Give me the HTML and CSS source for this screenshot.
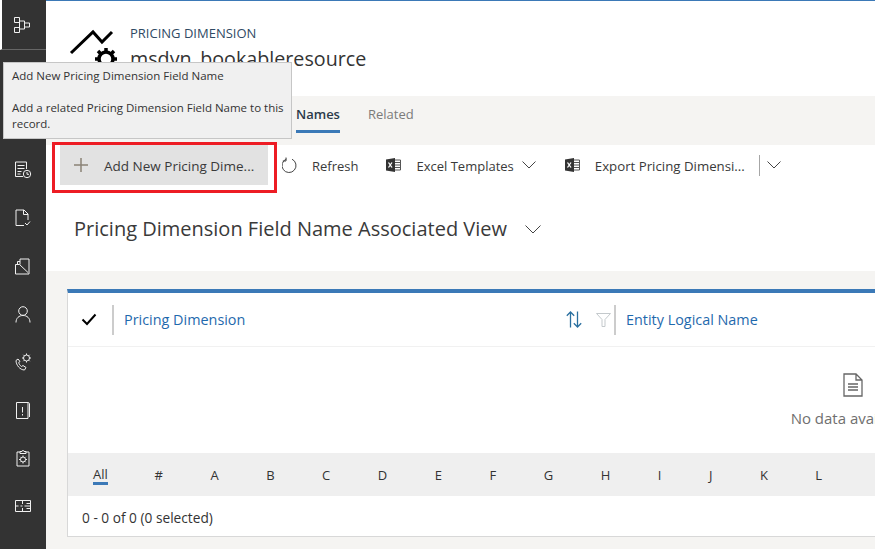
FILE: index.html
```html
<!DOCTYPE html>
<html>
<head>
	<meta charset="utf-8">
	<title>Pricing Dimension</title>
	<link rel="stylesheet" href="styles.css">
</head>
<body>
	<div class="app">
		<div class="sidebar">
			<div class="navItem current">
				<svg width="16" height="16" viewBox="0 0 16 16"><path d="M.5.500h5v5h-5zM.5 10.500h5v5h-5zM5.500 3v10.500M5.500 4h5v8h-5M10.500 6h5v4h-5z"/></svg>
			</div>
			<div class="navItem"></div>
			<div class="navItem"></div>
			<div class="navItem">
				<svg width="18" height="18" viewBox="0 0 18 18"><path d="M9 15.500H1.500V1H12.500V8M3.500 4.500h7M3.500 7.500h7M3.500 10.500h4M3.500 13h3"/><circle cx="13" cy="13" r="3.700"/><path d="M13 11v2.300h2"/></svg>
			</div>
			<div class="navItem">
				<svg width="16" height="18" viewBox="0 0 16 18"><path d="M9 16.500H1V1h8l4 4v6M8.500 1v4.500H13M10 14l2 2 3-3.500"/></svg>
			</div>
			<div class="navItem">
				<svg width="16" height="17" viewBox="0 0 16 17"><path d="M.500 16V6.500h4l8.500 8M.500 16h13.500V1H5v5.500M2.500 6.500v-3H5"/></svg>
			</div>
			<div class="navItem">
				<svg width="16" height="17" viewBox="0 0 16 17"><circle cx="8" cy="5" r="4.300"/><path d="M1 16.500c0-4.500 3-7 7-7s7 2.500 7 7"/></svg>
			</div>
			<div class="navItem">
				<svg width="17" height="18" viewBox="0 0 17 18"><path d="M3 6 1 7.500C1 12 5 17 9.500 17l1.500-2.500-3-2-1.500 1C5 12.500 4 11 3.700 9.500L5 8.500z"/><circle cx="11.500" cy="5" r="3"/><path d="M11.500.500v1.500M11.500 8v1.500M7 5h1.500M14.500 5H16M8.300 1.800l1 1M13.700 7.200l1 1M8.300 8.200l1-1M13.700 2.800l1-1"/></svg>
			</div>
			<div class="navItem">
				<svg width="14" height="17" viewBox="0 0 14 17"><path d="M12 .500H.500V16.500H12V.500c1 0 1.500.500 1.500 1.500V15M6.500 5v5.500M6.500 12v1.500"/></svg>
			</div>
			<div class="navItem">
				<svg width="14" height="18" viewBox="0 0 14 18"><path d="M4 3H1v14h12V3h-3M4 4.500V2.500h2C6 1 8 1 8 2.500h2v2z"/><circle cx="7" cy="10.500" r="2.500"/><path d="M7 6.500v1.500M7 13v1.500M3 10.500h1.500M9.500 10.500H11M4.300 7.800l1 1M8.700 12.200l1 1M4.300 13.200l1-1M8.700 8.800l1-1"/></svg>
			</div>
			<div class="navItem">
				<svg width="16" height="12" viewBox="0 0 16 12"><path d="M.500.500h15v11H.500zM.500 6h3M5.500 6h2M7.500.500V4M7.500 8v3.500M9.500 6h6M11.500 3.500h4M11.500 8.500h4"/></svg>
			</div>
		</div>

		<div class="main">
			<div class="head">
				<svg class="entityIcon" width="44" height="40" viewBox="0 0 44 40">
					<path class="trend" d="M1 22 23 1 32 11 42 1"/>
					<g class="gear">
						<circle cx="36" cy="28" r="7"/>
						<path d="M36 17v4M36 35v4M25 28h4M43 28h4M28 20l3 3M41 33l3 3M28 36l3-3M41 23l3-3"/>
					</g>
				</svg>
				<div class="headText">
					<div class="entityType">PRICING DIMENSION</div>
					<div class="entityName">msdyn_bookableresource</div>
				</div>
			</div>

			<div class="tabs">
				<span class="tab active">Names</span>
				<span class="tab">Related</span>
			</div>

			<div class="toolbar">
				<div class="cmd addBtn">
					<svg class="plus" width="14" height="14" viewBox="0 0 14 14"><path d="M7 0v14M0 7h14"/></svg>
					<span>Add New Pricing Dime...</span>
				</div>
				<div class="cmd refresh">
					<svg class="line" width="16" height="16" viewBox="0 0 16 16"><path d="M10 2.200A7 7 0 1 1 4.500 2M4 .500v3.500H.800"/></svg>
					<span>Refresh</span>
				</div>
				<div class="cmd excel">
					<svg width="15" height="14" viewBox="0 0 15 14"><path class="xlBack" d="M8 2h6.500v10H8"/><path class="xlLines" d="M9 4.500h5M9 7h5M9 9.500h5"/><path class="xlFront" d="M0 1.500 9 0v14L0 12.500z"/><path class="xlMark" d="M2.500 4.500l3.500 5M6 4.500l-3.500 5"/></svg>
					<span>Excel Templates</span>
					<svg class="line chevron" width="14" height="8" viewBox="0 0 14 8"><path d="M.500.500 7 7 13.500.500"/></svg>
				</div>
				<div class="cmd export">
					<svg width="15" height="14" viewBox="0 0 15 14"><path class="xlBack" d="M8 2h6.500v10H8"/><path class="xlLines" d="M9 4.500h5M9 7h5M9 9.500h5"/><path class="xlFront" d="M0 1.500 9 0v14L0 12.500z"/><path class="xlMark" d="M2.500 4.500l3.500 5M6 4.500l-3.500 5"/></svg>
					<span>Export Pricing Dimensi...</span>
				</div>
				<div class="cmdSep"></div>
				<svg class="line chevron more" width="14" height="8" viewBox="0 0 14 8"><path d="M.500.500 7 7 13.500.500"/></svg>
			</div>

			<div class="viewTitle">
				<span>Pricing Dimension Field Name Associated View</span>
				<svg class="line" width="16" height="9" viewBox="0 0 16 9"><path d="M.500.500 8 8 15.500.500"/></svg>
			</div>

			<div class="content">
				<div class="grid">
					<div class="gridHead">
						<svg class="check" width="16" height="13" viewBox="0 0 16 13"><path d="M1.500 6.500 6 11 14.500 1.500"/></svg>
						<div class="colSep firstSep"></div>
						<div class="colName first">Pricing Dimension</div>
						<svg class="sort" width="16" height="17" viewBox="0 0 16 17"><path d="M4.500 16.500V1M.800 4.700 4.500 1l3.700 3.700M11.500.500V16M7.800 12.300l3.700 3.700 3.700-3.700"/></svg>
						<svg class="filter" width="15" height="14" viewBox="0 0 15 14"><path d="M.500.500h14L9 6.500v7H6v-7z"/></svg>
						<div class="colSep"></div>
						<div class="colName">Entity Logical Name</div>
					</div>
					<div class="empty">
						<svg class="docIcon" width="20" height="24" viewBox="0 0 20 24"><path d="M1 1h12l6 6v16H1zM13 1v6h6M5 11h10M5 14h10M5 17h10"/></svg>
						<div>No data available.</div>
					</div>
					<div class="jumpBar">
						<span class="all">All</span>
						<span class="jump">#</span>
						<span class="jump">A</span>
						<span class="jump">B</span>
						<span class="jump">C</span>
						<span class="jump">D</span>
						<span class="jump">E</span>
						<span class="jump">F</span>
						<span class="jump">G</span>
						<span class="jump">H</span>
						<span class="jump">I</span>
						<span class="jump">J</span>
						<span class="jump">K</span>
						<span class="jump">L</span>
					</div>
					<div class="gridFoot">0 - 0 of 0 (0 selected)</div>
				</div>
			</div>
		</div>

		<div class="tooltip">
			<p>Add New Pricing Dimension Field Name</p>
			<p>Add a related Pricing Dimension Field Name to this record.</p>
		</div>
	</div>
</body>
</html>
```

FILE: styles.css
```css
html, body, div, p{
	padding: 0; margin: 0;
}
html, body{
	height: 100%;
	overflow: hidden;
}
body{
	background: #fff;
	color: #333;
	font: 14px/20px "Open Sans", "Noto Sans", sans-serif;
}
svg{
	display: block;
	flex: none;
	fill: none;
}
.app{
	display: flex;
	position: relative;
	width: 875px;
	height: 549px;
	overflow: hidden;
}

/* left nav */
.sidebar{
	width: 46px;
	flex: none;
	background: #333;
}
.navItem{
	height: 48px;
	display: flex;
	align-items: center;
	justify-content: center;
}
.navItem svg{
	stroke: #f0f0f0;
	stroke-width: 1;
}
.navItem.current{
	height: 49px;
	border-left: 2px solid #fff;
	border-bottom: 1px solid #666;
	padding-right: 4px;
}

/* header */
.main{
	flex: 1;
	min-width: 0;
	display: flex;
	flex-direction: column;
	border-top: 1px solid #3b79b7;
}
.head{
	height: 95px;
	flex: none;
	display: flex;
	padding: 20px 0 0 24px;
	box-sizing: border-box;
}
.entityIcon{
	margin: 10px 16px 0 0;
	overflow: visible;
}
.trend{
	stroke: #000;
	stroke-width: 3;
}
.gear{
	stroke: #000;
	stroke-width: 3.500;
}
.entityType{
	font-size: 13px;
	line-height: 24px;
	color: #2f4a64;
}
.entityName{
	font-size: 19.700px;
	line-height: 28px;
	color: #333;
}

/* tabs */
.tabs{
	height: 49px;
	flex: none;
	background: #f5f4f2;
	box-sizing: border-box;
	display: flex;
	gap: 28px;
	padding: 8px 0 0 250px;
}
.tab{
	height: 26px;
	line-height: 20px;
	font-size: 13px;
	color: #7b7b7b;
}
.tab.active{
	color: #2b3a4a;
	font-weight: 600;
	border-bottom: 3px solid #3b79b7;
}

/* command bar */
.toolbar{
	height: 40px;
	flex: none;
	display: flex;
	align-items: center;
	padding-left: 14px;
	font-size: 13px;
}
.cmd{
	display: flex;
	align-items: center;
	height: 40px;
	color: #3a3a3a;
}
.cmd span{
	padding-top: 2px;
}
.addBtn{
	position: relative;
	width: 208px;
	box-sizing: border-box;
	background: #e2e2e2;
	padding-left: 14px;
	gap: 16px;
	font-size: 13.500px;
}
/* red box drawn round the button */
.addBtn::after{
	content: "";
	position: absolute;
	top: -3px;
	left: -8px;
	right: -9px;
	bottom: -8px;
	border: 3px solid #ed1c24;
}
.plus{
	stroke: #8a8276;
	stroke-width: 1.500;
}
.line{
	stroke: #444;
	stroke-width: 1;
}
.refresh{
	margin-left: 14px;
	gap: 14px;
}
.excel{
	margin-left: 28px;
	gap: 15px;
}
.export{
	margin-left: 29px;
	gap: 15px;
	font-size: 13.250px;
}
.excel .chevron{
	margin-left: -7px;
}
.xlBack{
	fill: #fff;
	stroke: #555;
}
.xlLines{
	stroke: #555;
}
.xlFront{
	fill: #333;
}
.xlMark{
	stroke: #fff;
	stroke-width: 1.300;
}
.cmdSep{
	width: 1px;
	height: 21px;
	background: #a6a6a6;
	margin-left: 14px;
}
.more{
	margin-left: 7px;
}

/* view title */
.viewTitle{
	height: 86px;
	flex: none;
	box-sizing: border-box;
	display: flex;
	align-items: center;
	gap: 18px;
	padding: 2px 0 0 28px;
	font-size: 20px;
	color: #3a3a3a;
}

/* grid */
.content{
	flex: 1;
	background: #f5f4f2;
	padding: 18px 0 0 21px;
	min-height: 0;
}
.grid{
	width: 1570px;
	background: #fff;
	border-top: 4px solid #3b79b7;
	border-left: 1px solid #d8d8d8;
	border-bottom: 1px solid #d8d8d8;
}
.gridHead{
	height: 54px;
	box-sizing: border-box;
	border-bottom: 1px solid #f1f1f1;
	display: flex;
	align-items: center;
	font-size: 14.400px;
}
.check{
	margin-left: 13px;
	stroke: #000;
	stroke-width: 2;
}
.colSep{
	width: 2px;
	height: 30px;
	background: #ccc;
}
.firstSep{
	margin-left: 15px;
}
.colName{
	color: #1f69ad;
	margin-left: 10px;
}
.colName.first{
	width: 442px;
}
.sort{
	stroke: #2a6f9f;
	stroke-width: 1.300;
}
.filter{
	margin: 0 3px 0 14px;
	stroke: #c4c9cc;
}
.empty{
	height: 106px;
	box-sizing: border-box;
	padding-top: 26px;
	text-align: center;
	font-size: 15px;
	line-height: 22px;
	color: #6f6f6f;
}
.docIcon{
	margin: 0 auto 10px;
	stroke: #666;
	stroke-width: 1.300;
}
.jumpBar{
	height: 43px;
	background: #efefef;
	display: flex;
	align-items: center;
	padding-left: 25px;
	font-size: 13px;
	color: #333;
}
.jump{
	padding: 0 23.750px;
}
.all{
	margin: 3px 23px 0 0;
	border-bottom: 3px solid #3b79b7;
	line-height: 15px;
}
.gridFoot{
	height: 40px;
	box-sizing: border-box;
	padding: 12px 0 0 14px;
	font-size: 13.700px;
	color: #333;
}

/* hover tip */
.tooltip{
	position: absolute;
	left: 3px;
	top: 62px;
	width: 289px;
	height: 77px;
	box-sizing: border-box;
	background: #f0f0f0;
	border: 1px solid #c6c6c6;
	padding: 5px 4px 5px 8px;
	font-size: 11.500px;
	line-height: 16px;
	color: #333;
}
.tooltip p + p{
	margin-top: 16px;
}
```
